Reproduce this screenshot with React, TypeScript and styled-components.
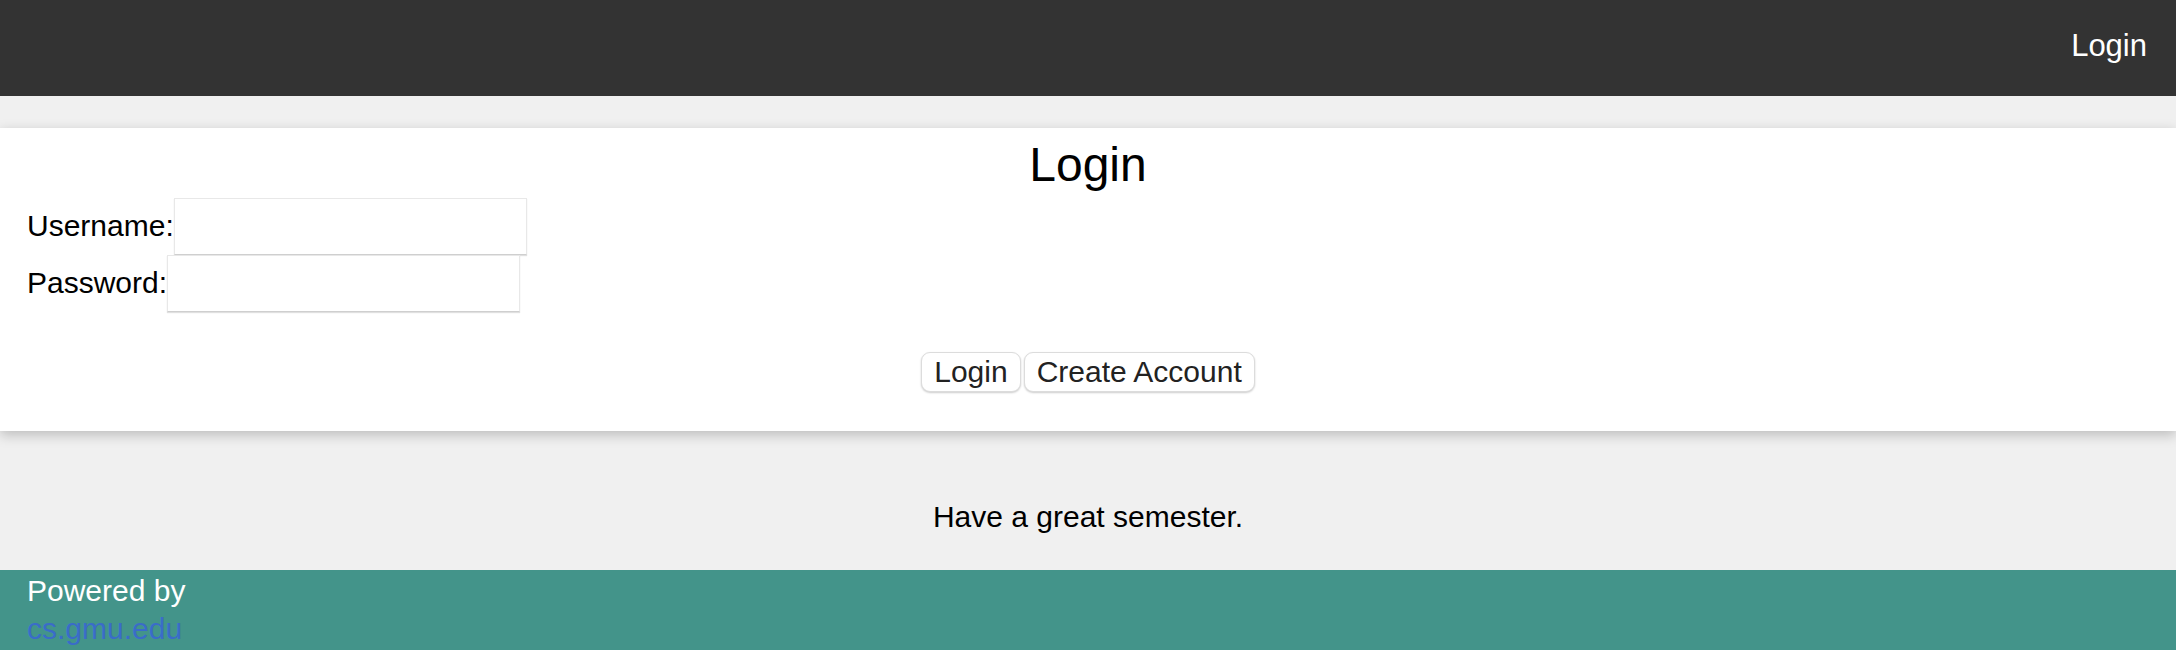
import React from "react";
import styled, { createGlobalStyle } from "styled-components";

const Global = createGlobalStyle`
  html, body {
    margin: 0;
    padding: 0;
    background: #ffffff;
  }
  body {
    font-family: "Liberation Sans", Arial, Helvetica, sans-serif;
    color: #000;
  }
`;

const Header = styled.header`
  height: 96px;
  background: #333333;
  display: flex;
  justify-content: flex-end;
  align-items: center;
  padding-right: 29px;
  box-sizing: border-box;
`;

const NavLink = styled.a`
  color: #ffffff;
  font-size: 31px;
  text-decoration: none;
  margin-top: -4px;
`;

const Main = styled.main`
  background: #f0f0f0;
  padding-top: 32px;
  display: flex;
  flex-direction: column;
`;

const Card = styled.section`
  background: #ffffff;
  box-shadow: 0 4px 12px rgba(0, 0, 0, 0.22);
  padding: 8px 27px 39px;
  display: flex;
  flex-direction: column;
`;

const Title = styled.h1`
  margin: 0 0 4px;
  font-size: 48px;
  font-weight: normal;
  text-align: center;
  line-height: 1.2;
`;

const Field = styled.div`
  display: flex;
  align-items: center;
`;

const Label = styled.label`
  font-size: 30px;
  line-height: 34px;
`;

const Input = styled.input`
  width: 353px;
  height: 57px;
  box-sizing: border-box;
  border: 1px solid #e8e8e8;
  border-bottom-color: #cfcfcf;
  box-shadow: 0 1px 1px rgba(0, 0, 0, 0.12);
  background: #fff;
  padding: 0 6px;
  font-size: 26px;
  outline: none;
`;

const Actions = styled.div`
  display: flex;
  justify-content: center;
  gap: 3px;
  margin-top: 40px;
`;

const Button = styled.button`
  height: 40px;
  box-sizing: border-box;
  padding: 0 12px;
  font-family: "Liberation Sans", Arial, Helvetica, sans-serif;
  font-size: 30px;
  color: #222222;
  background: #ffffff;
  border: 1px solid #dcdcdc;
  border-radius: 9px;
  box-shadow: 0 1px 2px rgba(0, 0, 0, 0.2);
  line-height: 1;
  cursor: pointer;
`;

const Message = styled.p`
  margin: 69px 0 0;
  padding-bottom: 36px;
  text-align: center;
  font-size: 30px;
  line-height: 1.15;
`;

const Footer = styled.footer`
  background: #43948a;
  height: 80px;
  box-sizing: border-box;
  padding: 2px 27px 0;
  font-size: 30px;
  line-height: 38px;
  color: #ffffff;
`;

const FooterLine = styled.div``;

const FooterLink = styled.a`
  color: #3a6cc9;
  text-decoration: none;
`;

export default function App() {
  return (
    <>
      <Global />
      <Header>
        <NavLink href="#">Login</NavLink>
      </Header>
      <Main>
        <Card>
          <Title>Login</Title>
          <Field>
            <Label htmlFor="username">Username:</Label>
            <Input id="username" type="text" />
          </Field>
          <Field>
            <Label htmlFor="password">Password:</Label>
            <Input id="password" type="password" />
          </Field>
          <Actions>
            <Button>Login</Button>
            <Button>Create Account</Button>
          </Actions>
        </Card>
        <Message>Have a great semester.</Message>
      </Main>
      <Footer>
        <FooterLine>Powered by</FooterLine>
        <FooterLine>
          <FooterLink href="#">cs.gmu.edu</FooterLink>
        </FooterLine>
      </Footer>
    </>
  );
}
